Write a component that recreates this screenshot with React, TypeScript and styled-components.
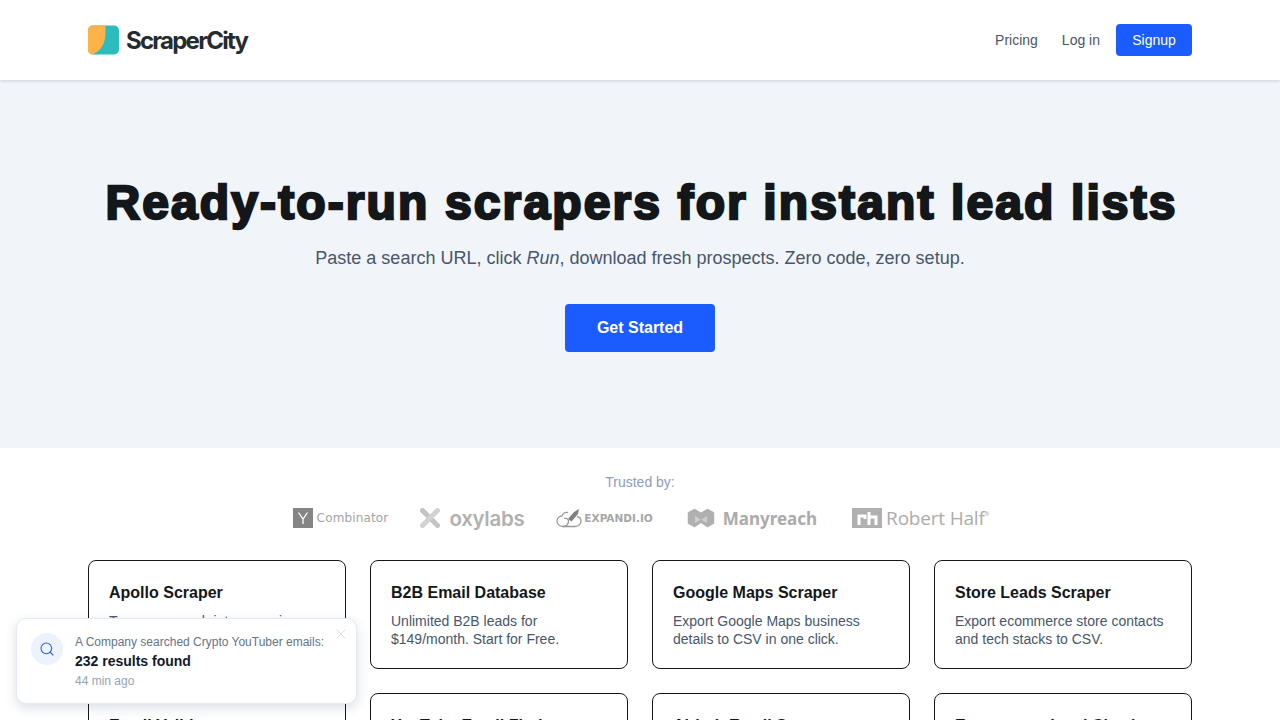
import styled, {createGlobalStyle} from 'styled-components';
import {Search, X} from 'lucide-react';

const GlobalStyle = createGlobalStyle`
  html, body {
    margin: 0;
    padding: 0;
    height: 720px;
    overflow: hidden;
    background: #fff;
    font-family: "Liberation Sans", Arial, sans-serif;
  }
  * { box-sizing: border-box; }
`;

const Page = styled.div`
  width: 1280px;
  height: 720px;
  overflow: hidden;
  position: relative;
`;

const Header = styled.header`
  height: 80px;
  background: #fff;
  padding: 0 88px;
  display: flex;
  align-items: center;
  justify-content: space-between;
  box-shadow: 0 1px 3px rgba(30, 50, 90, 0.18);
  position: relative;
`;

const Brand = styled.div`
  display: flex;
  align-items: center;
  gap: 7px;
`;

const BrandName = styled.span`
  font-family: Inter, "Liberation Sans", sans-serif;
  font-size: 24px;
  font-weight: 700;
  letter-spacing: -1.75px;
  color: #262b30;
`;

const Nav = styled.nav`
  display: flex;
  align-items: center;
  gap: 24px;
`;

const NavLink = styled.a`
  font-size: 14px;
  color: #4a5568;
`;

const SignupButton = styled.a`
  width: 76px;
  height: 32px;
  margin-left: -8px;
  display: flex;
  align-items: center;
  justify-content: center;
  background: #1a5cff;
  border-radius: 4px;
  color: #fff;
  font-size: 14px;
`;

const Hero = styled.section`
  height: 368px;
  background: #f1f4f9;
  display: flex;
  flex-direction: column;
  align-items: center;
  padding-top: 93px;
`;

const Title = styled.h1`
  margin: 0;
  padding-left: 3px;
  font-size: 48px;
  line-height: 60px;
  font-weight: 700;
  color: #14171a;
  -webkit-text-stroke: 2.4px #14171a;
  letter-spacing: 2.12px;
  white-space: nowrap;
`;

const Subtitle = styled.p`
  margin: 12px 0 0;
  font-size: 18px;
  line-height: 26px;
  color: #47566c;
`;

const CtaButton = styled.a`
  margin-top: 33px;
  width: 150px;
  height: 48px;
  display: flex;
  align-items: center;
  justify-content: center;
  background: #1a5cff;
  border-radius: 4px;
  color: #fff;
  font-size: 16px;
  font-weight: 700;
`;

const Trusted = styled.section`
  display: flex;
  flex-direction: column;
  align-items: center;
  padding-top: 26px;
`;

const TrustedLabel = styled.div`
  font-size: 14px;
  line-height: 16px;
  color: #8e9cc0;
`;

const LogoRow = styled.div`
  margin-top: 15px;
  height: 26px;
  display: flex;
  align-items: center;
  gap: 32px;
  padding-left: 2px;
  color: #a9a9a9;
`;

const Logo = styled.div`
  display: flex;
  align-items: center;
`;

const YcWord = styled.span`
  margin-left: 4px;
  font-family: "DejaVu Sans", sans-serif;
  font-size: 12px;
  letter-spacing: 0.15px;
  color: #a3a3a3;
`;

const OxyWord = styled.span`
  margin-left: 9px;
  font-family: Inter, sans-serif;
  font-size: 20.5px;
  font-weight: 600;
  letter-spacing: -0.3px;
  color: #b0b0b0;
`;

const ExpandiWord = styled.span`
  font-family: "DejaVu Sans", sans-serif;
  font-size: 10.5px;
  font-weight: 700;
  margin-left: 2px;
  color: #a6a6a6;
`;

const ManyLogo = styled(Logo)`
  margin-left: 2px;
`;

const ManyWord = styled.span`
  margin-left: 8px;
  font-family: "Noto Sans", sans-serif;
  font-size: 17px;
  font-weight: 700;
  color: #ababab;
`;

const HalfLogo = styled(Logo)`
  margin-left: 3px;
`;

const HalfWord = styled.span`
  margin-left: 4px;
  font-family: "Open Sans", sans-serif;
  font-size: 19px;
  letter-spacing: -0.2px;
  color: #acacac;
`;

const HalfMark = styled.sup`
  font-size: 6px;
  line-height: 0;
  vertical-align: 9px;
`;

const CardGrid = styled.div`
  margin-top: 29px;
  padding: 0 88px;
  display: grid;
  grid-template-columns: repeat(4, 258px);
  column-gap: 24px;
  row-gap: 24px;
`;

const Card = styled.div`
  height: 109px;
  border: 1px solid #14171a;
  border-radius: 8px;
  background: #fff;
  padding: 21px 20px 0;
`;

const CardTitle = styled.div`
  font-size: 16px;
  line-height: 22px;
  font-weight: 700;
  color: #14171a;
`;

const CardText = styled.div`
  margin-top: 8px;
  font-size: 14px;
  line-height: 18px;
  color: #47566c;
`;

const Toast = styled.div`
  position: absolute;
  left: 16px;
  top: 618px;
  width: 341px;
  height: 86px;
  background: #fff;
  border: 1px solid #e4e9f2;
  border-radius: 10px;
  box-shadow: 0 4px 12px rgba(30, 50, 90, 0.16);
  display: flex;
  padding: 14px 0 0 14px;
`;

const ToastIcon = styled.div`
  width: 32px;
  height: 32px;
  border-radius: 50%;
  background: #edf3fe;
  color: #2563eb;
  display: flex;
  align-items: center;
  justify-content: center;
`;

const ToastBody = styled.div`
  margin-left: 12px;
`;

const ToastLine = styled.div`
  font-size: 12px;
  line-height: 18px;
  color: #64748b;
`;

const ToastStrong = styled.div`
  margin-top: 1px;
  font-size: 14px;
  line-height: 18px;
  font-weight: 700;
  color: #14192b;
`;

const ToastTime = styled.div`
  margin-top: 2px;
  font-size: 12px;
  line-height: 18px;
  color: #94a3b8;
`;

const ToastClose = styled.span`
  position: absolute;
  top: 7px;
  right: 7px;
  display: flex;
  color: #d5dce8;
`;

const cards = [
  ['Apollo Scraper', 'Turn any search into a precise\nlead list.'],
  ['B2B Email Database', 'Unlimited B2B leads for\n$149/month. Start for Free.'],
  ['Google Maps Scraper', 'Export Google Maps business\ndetails to CSV in one click.'],
  ['Store Leads Scraper', 'Export ecommerce store contacts\nand tech stacks to CSV.'],
  ['Email Validator', 'Verify emails in bulk.'],
  ['YouTube Email Finder', 'Find creator emails.'],
  ['Airbnb Email Scraper', 'Export host emails.'],
  ['Ecommerce Lead Checker', 'Check store leads.'],
];

const App = () => {
  return (
    <Page>
      <GlobalStyle />
      <Header>
        <Brand>
          <svg width="31" height="30" viewBox="0 0 32 30">
            <rect width="32" height="30" rx="5" fill="#2bbcc0" />
            <path d="M5 0H18V8C18 19 13 27 4 30H5C2 30 0 28 0 25V5C0 2 2 0 5 0Z" fill="#fdb347" />
          </svg>
          <BrandName>ScraperCity</BrandName>
        </Brand>
        <Nav>
          <NavLink>Pricing</NavLink>
          <NavLink>Log in</NavLink>
          <SignupButton>Signup</SignupButton>
        </Nav>
      </Header>
      <Hero>
        <Title>Ready-to-run scrapers for instant lead lists</Title>
        <Subtitle>
          Paste a search URL, click <em>Run</em>, download fresh prospects. Zero code, zero setup.
        </Subtitle>
        <CtaButton>Get Started</CtaButton>
      </Hero>
      <Trusted>
        <TrustedLabel>Trusted by:</TrustedLabel>
        <LogoRow>
          <Logo>
            <svg width="20" height="20" viewBox="0 0 20 20">
              <rect width="20" height="20" fill="#858585" />
              <path d="M5.500 4.500L10 11L14.500 4.500M10 11V16" stroke="#fff" strokeWidth="1.3" fill="none" />
            </svg>
            <YcWord>Combinator</YcWord>
          </Logo>
          <Logo>
            <svg width="20" height="20" viewBox="0 0 20 20">
              <path d="M2.500 2.500L17.500 17.500" stroke="#c4c4c4" strokeWidth="5" strokeLinecap="round" />
              <path d="M17.500 2.500L2.500 17.500" stroke="#d2d2d2" strokeWidth="5" strokeLinecap="round" />
            </svg>
            <OxyWord>oxylabs</OxyWord>
          </Logo>
          <Logo>
            <svg width="26" height="20" viewBox="0 0 26 20" fill="none" stroke="#9a9a9a" strokeWidth="1.3">
              <path d="M7 18.500C3.500 18.500 1 16 1 13C1 10 3.500 8 6 8C7 5.500 9.500 4 12 4.500" />
              <path d="M7 18.500H19C22.500 18.500 25 16 25 13C25 10.500 23.500 9 21 8.500" />
              <path d="M7 18.500C10 18.500 12 16.500 12.500 14C13 11.500 10.500 9.500 8 10.500" />
              <path d="M12 11L18 4L23 1L22 6L15.500 13.500Z" fill="#808080" stroke="none" />
            </svg>
            <ExpandiWord>EXPANDI.IO</ExpandiWord>
          </Logo>
          <ManyLogo>
            <svg width="28" height="20" viewBox="0 0 28 20">
              <path d="M2 5L7.500 2L14 6L20.500 2L26 5V15L20.500 18L14 13.500L7.500 18L2 15Z" fill="#b0b0b0" stroke="#b0b0b0" strokeWidth="2.5" strokeLinejoin="round" />
              <path d="M8 8L14 12L20 8L20 15L14 11.500L8 15Z" fill="#cfcfcf" />
            </svg>
            <ManyWord>Manyreach</ManyWord>
          </ManyLogo>
          <HalfLogo>
            <svg width="30" height="20" viewBox="0 0 30 20">
              <rect width="30" height="20" fill="#b0b0b0" />
              <path d="M7 17V8H13V11M17 17V4M17 9H24V17" stroke="#fff" strokeWidth="3" fill="none" />
            </svg>
            <HalfWord>
              Robert Half<HalfMark>®</HalfMark>
            </HalfWord>
          </HalfLogo>
        </LogoRow>
      </Trusted>
      <CardGrid>
        {cards.map(([title, text]) => (
          <Card key={title}>
            <CardTitle>{title}</CardTitle>
            <CardText>
              {text.split('\n').map((line) => (
                <div key={line}>{line}</div>
              ))}
            </CardText>
          </Card>
        ))}
      </CardGrid>
      <Toast>
        <ToastIcon>
          <Search size={16} strokeWidth={1.6} />
        </ToastIcon>
        <ToastBody>
          <ToastLine>A Company searched Crypto YouTuber emails:</ToastLine>
          <ToastStrong>232 results found</ToastStrong>
          <ToastTime>44 min ago</ToastTime>
        </ToastBody>
        <ToastClose>
          <X size={16} strokeWidth={1.5} />
        </ToastClose>
      </Toast>
    </Page>
  );
};

export default App;
